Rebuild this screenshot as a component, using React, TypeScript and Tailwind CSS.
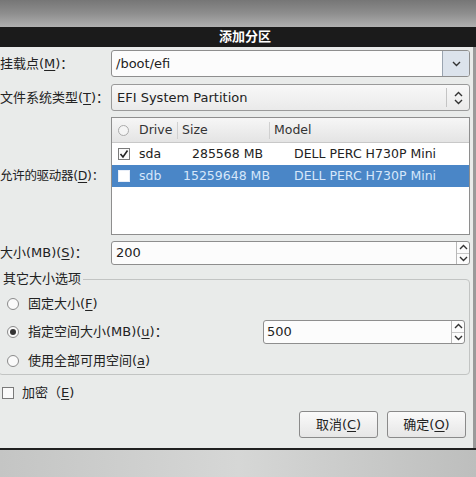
import React from "react";

const U = ({ c }: { c: string }) => <span className="underline underline-offset-2">{c}</span>;

const Chev = ({ dir }: { dir: "up" | "down" }) => (
  <svg width="9" height="6" viewBox="0 0 9 6" className="block">
    <path d={dir === "down" ? "M1 1 L4.5 4.5 L8 1" : "M1 5 L4.5 1.5 L8 5"} fill="none" stroke="#333" strokeWidth="1.4" />
  </svg>
);

const Spin = ({ h }: { h: string }) => (
  <div className={`flex flex-col w-[13px] border-l border-[#b8b8b8] ${h}`}>
    <div className="flex-1 flex items-center justify-center border-b border-[#c8c8c8]"><Chev dir="up" /></div>
    <div className="flex-1 flex items-center justify-center"><Chev dir="down" /></div>
  </div>
);

const Radio = ({ on }: { on?: boolean }) => (
  <div className="w-[12px] h-[12px] rounded-full border border-[#8a8a8a] bg-[#fafafa] flex items-center justify-center">
    {on && <div className="w-[6px] h-[6px] rounded-full bg-[#333]" />}
  </div>
);

const Check = ({ on, white }: { on?: boolean; white?: boolean }) => (
  <div className={`w-[12px] h-[12px] border ${white ? "border-[#e8eef8] bg-white" : "border-[#7a7a7a] bg-[#fafafa]"} flex items-center justify-center`}>
    {on && (
      <svg width="10" height="10" viewBox="0 0 10 10">
        <path d="M1.5 5 L4 8 L8.5 1.5" fill="none" stroke="#222" strokeWidth="1.6" />
      </svg>
    )}
  </div>
);

export default function App() {
  const font = { fontFamily: '"DejaVu Sans", "Noto Sans CJK SC", sans-serif' };
  return (
    <div className="w-[476px] h-[477px] flex flex-col overflow-hidden text-[#222]" style={font}>
      <div className="h-[27px] bg-gradient-to-b from-[#767676] via-[#8e8e8e] to-[#b0b0b0]" />
      <div className="h-[20px] bg-[#1b1b1b] flex items-center justify-center pl-[14px] text-white text-[13px] font-bold">
        添加分区
      </div>
      <div className="h-[401px] flex">
        <div className="w-[473px] bg-[#e9ebea] flex flex-col pt-[3px] text-[13px]">
          {/* mount point */}
          <div className="flex h-[27px] items-center">
            <div className="w-[111px] shrink-0 whitespace-nowrap">挂载点(<U c="M" />)：</div>
            <div className="flex-1 mr-[3px] h-[27px] flex border border-[#8e8e8e] rounded-[3px] bg-[#fcfcfc] overflow-hidden">
              <div className="flex-1 flex items-center pl-[4px]">/boot/efi</div>
              <div className="w-[27px] bg-[#dce3ec] border-l border-[#9aa4b0] flex items-center justify-center">
                <Chev dir="down" />
              </div>
            </div>
          </div>
          {/* fs type */}
          <div className="flex h-[27px] items-center mt-[7px]">
            <div className="w-[111px] shrink-0 whitespace-nowrap">文件系统类型(<U c="T" />)：</div>
            <div className="flex-1 mr-[3px] h-[27px] flex items-center border border-[#9a9a9a] rounded-[3px] bg-gradient-to-b from-[#f8f8f8] to-[#eaeaea]">
              <div className="flex-1 pl-[5px]">EFI System Partition</div>
              <div className="w-[1px] h-[19px] bg-[#c4c4c4]" />
              <div className="w-[22px] flex flex-col items-center gap-[2px]">
                <Chev dir="up" />
                <Chev dir="down" />
              </div>
            </div>
          </div>
          {/* drives */}
          <div className="flex mt-[6px] h-[118px]">
            <div className="w-[111px] shrink-0 flex items-center whitespace-nowrap text-[12.5px] tracking-[-0.3px]">允许的驱动器(<U c="D" />)：</div>
            <div className="flex-1 mr-[3px] border border-[#8e8e8e] bg-white flex flex-col text-[12.5px]">
              <div className="h-[25px] flex items-center bg-gradient-to-b from-[#f6f6f6] to-[#e4e4e4] border-b border-[#c8c8c8] text-[#333]">
                <div className="w-[22px] flex justify-center pl-[1px]">
                  <div className="w-[11px] h-[11px] rounded-full border border-[#aaa] bg-[#f4f4f4]" />
                </div>
                <div className="w-[44px] pl-[5px] border-r border-[#d0d0d0] h-[17px] flex items-center">Drive</div>
                <div className="w-[92px] pl-[4px] border-r border-[#d0d0d0] h-[17px] flex items-center">Size</div>
                <div className="pl-[4px]">Model</div>
              </div>
              <div className="h-[22px] flex items-center">
                <div className="w-[22px] flex justify-center pl-[1px]"><Check on /></div>
                <div className="w-[44px] pl-[5px]">sda</div>
                <div className="w-[92px] pl-[14px]">285568 MB</div>
                <div className="pl-[24px]">DELL PERC H730P Mini</div>
              </div>
              <div className="h-[22px] flex items-center bg-[#4a86c7] text-[#d6e6fa]">
                <div className="w-[22px] flex justify-center pl-[1px]"><Check white /></div>
                <div className="w-[44px] pl-[5px]">sdb</div>
                <div className="w-[92px] pl-[5px]">15259648 MB</div>
                <div className="pl-[24px]">DELL PERC H730P Mini</div>
              </div>
            </div>
          </div>
          {/* size */}
          <div className="flex h-[24px] items-center mt-[6px]">
            <div className="w-[111px] shrink-0 whitespace-nowrap">大小(MB)(<U c="S" />)：</div>
            <div className="flex-1 mr-[3px] h-[24px] flex border border-[#8e8e8e] rounded-[3px] bg-[#fcfcfc] overflow-hidden">
              <div className="flex-1 flex items-center pl-[4px]">200</div>
              <Spin h="h-full" />
            </div>
          </div>
          {/* frame */}
          <div className="relative mt-[6px] mr-[3px] h-[104px]">
            <div className="absolute left-[-2px] right-0 top-[8px] bottom-0 border border-[#c2c4c3] rounded-[4px]" />
            <div className="relative pl-[3px] bg-[#e9ebea] w-fit pr-[2px] leading-[16px] h-[16px]">其它大小选项</div>
            <div className="relative flex items-center h-[20px] mt-[7px] pl-[7px] gap-[9px]">
              <Radio />
              <span>固定大小(<U c="F" />)</span>
            </div>
            <div className="relative flex items-center h-[24px] mt-[6px] pl-[7px]">
              <div className="w-[256px] flex items-center gap-[9px]">
                <Radio on />
                <span>指定空间大小(MB)(<U c="u" />)：</span>
              </div>
              <div className="w-[202px] h-[24px] flex border border-[#8e8e8e] rounded-[3px] bg-[#fcfcfc] overflow-hidden">
                <div className="flex-1 flex items-center pl-[3px]">500</div>
                <Spin h="h-full" />
              </div>
            </div>
            <div className="relative flex items-center h-[20px] mt-[7px] pl-[7px] gap-[9px]">
              <Radio />
              <span>使用全部可用空间(<U c="a" />)</span>
            </div>
          </div>
          {/* encrypt */}
          <div className="flex items-center h-[20px] mt-[8px] pl-[2px] gap-[8px]">
            <Check />
            <span>加密（<U c="E" />)</span>
          </div>
          {/* buttons */}
          <div className="flex justify-end gap-[9px] mt-[8px] mr-[7px]">
            <div className="w-[79px] h-[27px] border border-[#8a8a8a] rounded-[3px] bg-gradient-to-b from-[#fafafa] to-[#e6e6e6] flex items-center justify-center">
              取消(<U c="C" />)
            </div>
            <div className="w-[79px] h-[27px] border border-[#8a8a8a] rounded-[3px] bg-gradient-to-b from-[#fafafa] to-[#e6e6e6] flex items-center justify-center">
              确定(<U c="O" />)
            </div>
          </div>
        </div>
        <div className="flex-1 bg-[#9a9a9a]" />
      </div>
      <div className="h-[2px] bg-[#202020]" />
      <div className="flex-1 bg-gradient-to-r from-[#c4c5c4] via-[#d6d7d6] to-[#bdbebd]" />
    </div>
  );
}
